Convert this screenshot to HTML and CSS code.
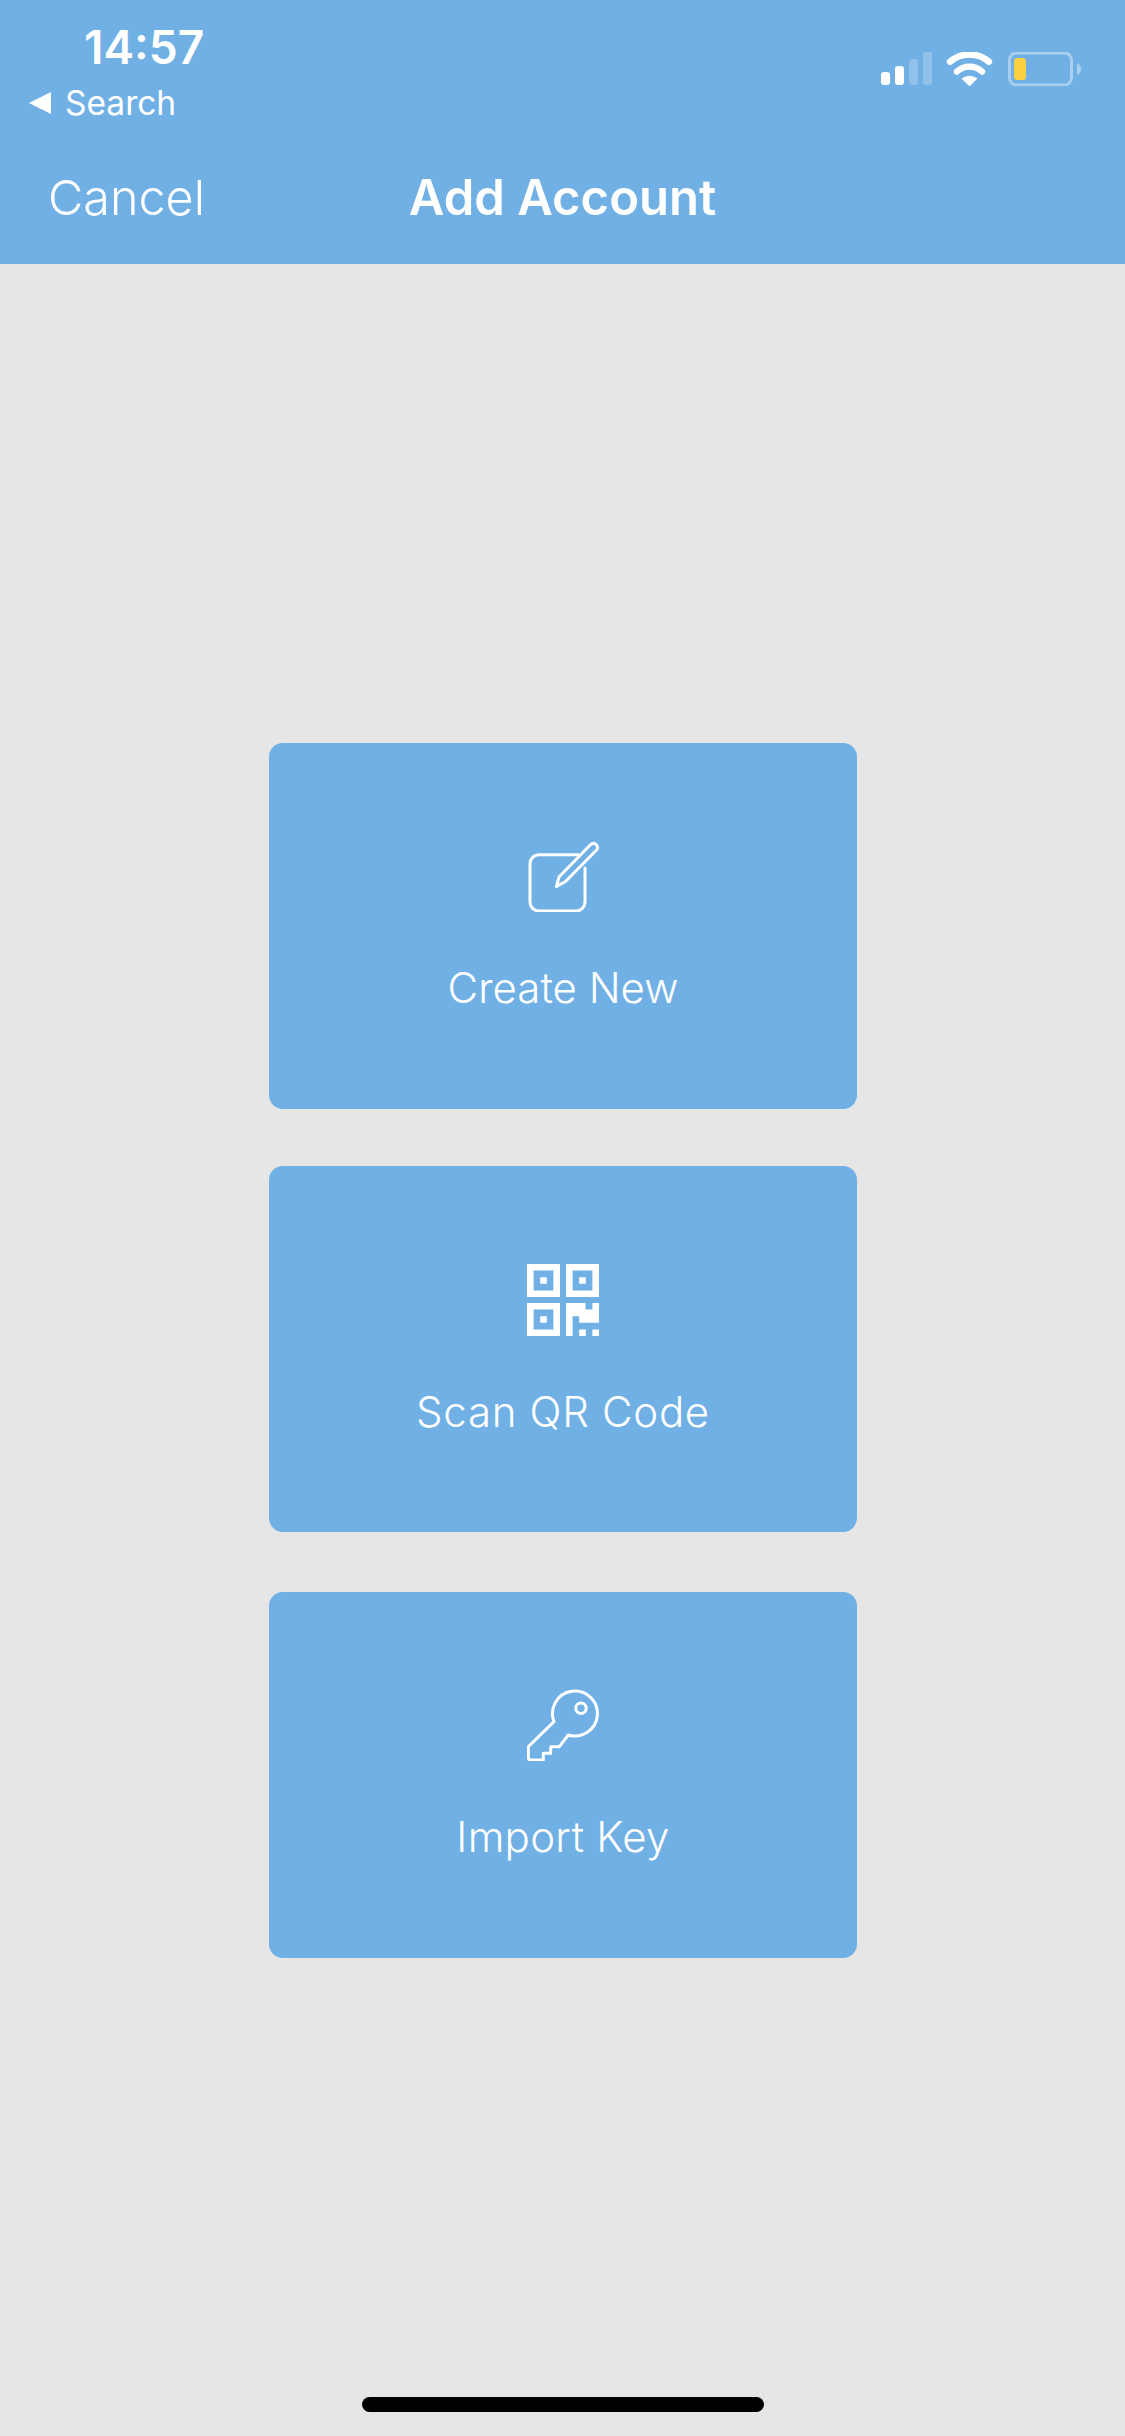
FILE: index.html
```html
<!DOCTYPE html>
<html lang="en">
<head>
<meta charset="utf-8">
<title>Add Account</title>
<link rel="stylesheet" href="styles.css">
</head>
<body>
<div class="screen">
  <header class="header">
    <div class="status">
      <div class="status-left">
        <div class="time">14:57</div>
        <div class="back"><span class="back-arrow"></span><span>Search</span></div>
      </div>
      <svg class="status-icons" width="200" height="34" viewBox="0 0 200 34">
        <rect x="0" y="20" width="9" height="13" rx="3" fill="#fff"/>
        <rect x="14" y="14" width="9" height="19" rx="3" fill="#fff"/>
        <rect x="28" y="7" width="9" height="26" rx="3" fill="#fff" opacity=".22"/>
        <rect x="42" y="0" width="9" height="33" rx="3" fill="#fff" opacity=".22"/>
        <path d="M69 9.7A30 30 0 0 1 108 9.7" fill="none" stroke="#fff" stroke-width="6.4" stroke-linecap="round"/>
        <path d="M76 19.5A18.5 18.5 0 0 1 101 19.5" fill="none" stroke="#fff" stroke-width="6.4" stroke-linecap="round"/>
        <path d="M80.5 26.5Q88.5 21 96.5 26.5L89.5 33.4Q88.5 34 87.5 33.4Z" fill="#fff"/>
        <rect x="128.5" y="1" width="62" height="32" rx="7" fill="none" stroke="#fff" stroke-width="3" opacity=".4"/>
        <rect x="133" y="6" width="12" height="22" rx="3.5" fill="#fdd042"/>
        <path d="M196 11Q200 13 200 17Q200 21 196 23Z" fill="#fff" opacity=".4"/>
      </svg>
    </div>
    <nav class="nav">
      <span class="cancel">Cancel</span>
      <h1 class="title">Add Account</h1>
      <span></span>
    </nav>
  </header>

  <main class="actions">
    <div class="card card-first">
      <svg class="icon" width="72" height="72" viewBox="0 0 72 72" fill="none" stroke="#fff" stroke-width="3" stroke-linejoin="round" stroke-linecap="round">
        <path d="M51 14.7H12a9 9 0 0 0-9 9V62a9 9 0 0 0 9 9H49a9 9 0 0 0 9-9V28"/>
        <path d="M29.5 46.5 32 37 63.7 4.5Q66 2.5 68.5 4 71.5 6.5 70 9.5L38.5 41.5Z"/>
      </svg>
      <span class="label">Create New</span>
    </div>
    <div class="card card-second">
      <svg class="icon icon-soft" width="72" height="72" viewBox="0 0 72 72">
        <path fill="#fff" fill-rule="evenodd" d="M0 0H33V33H0ZM6.6 6.6V26.4H26.4V6.6ZM13.2 13.2H19.8V19.8H13.2ZM39 0H72V33H39ZM45.6 6.6V26.4H65.4V6.6ZM52.2 13.2H58.8V19.8H52.2ZM0 39H33V72H0ZM6.6 45.6V65.4H26.4V45.6ZM13.2 52.2H19.8V58.8H13.2ZM39 39H58.5V45.6H65.4V39H72V58.8H52.2V52.2H45.6V72H39ZM52.2 65.4H58.8V72H52.2ZM65.4 65.4H72V72H65.4Z"/>
      </svg>
      <span class="label label-wide">Scan QR Code</span>
    </div>
    <div class="card">
      <svg class="icon" width="72" height="72" viewBox="0 0 72 72" fill="none" stroke="#fff" stroke-width="3" stroke-linejoin="round">
        <path d="M41.3 46A22.5 22.5 0 1 0 27 32.7L2.5 56.5Q1.3 57.5 1.3 59V68Q1.3 71 4 71H16.3V64.3H23.7V57.7H32.3Z"/>
        <circle cx="54" cy="19.3" r="5.2"/>
      </svg>
      <span class="label label-key">Import Key</span>
    </div>
  </main>

  <div class="home-bar"></div>
</div>
</body>
</html>
```

FILE: styles.css
```css
* {
  box-sizing: border-box;
}

html,
body {
  margin: 0;
  padding: 0;
}

body {
  font-family: Inter, "Liberation Sans", sans-serif;
  color: #fff;
  background: #e6e6e6;
}

.screen {
  width: 1125px;
  height: 2436px;
  display: flex;
  flex-direction: column;
  overflow: hidden;
}

.header {
  height: 264px;
  background: #70b0e5;
  flex: none;
}

.status {
  height: 163px;
  padding: 21px 44px 0 29px;
  display: flex;
  justify-content: space-between;
  align-items: flex-start;
}

.status-left {
  display: flex;
  flex-direction: column;
}

.time {
  font-size: 46px;
  line-height: 52px;
  font-weight: 600;
  margin-left: 55px;
}

.back {
  display: flex;
  align-items: center;
  gap: 14px;
  font-size: 33.5px;
  line-height: 40px;
  margin-top: 10px;
  font-weight: 400;
}

.back-arrow {
  width: 0;
  height: 0;
  border-style: solid;
  border-width: 11.5px 22px 11.5px 0;
  border-color: transparent #fff transparent transparent;
}

.status-icons {
  margin-top: 31px;
}

.nav {
  display: grid;
  grid-template-columns: 1fr auto 1fr;
  align-items: center;
  padding: 0 48px;
  height: 70px;
}

.cancel {
  font-size: 48.5px;
  font-weight: 350;
  line-height: 70px;
}

.title {
  margin: 0;
  font-size: 49px;
  line-height: 70px;
  font-weight: 600;
}

.actions {
  display: flex;
  flex-direction: column;
  align-items: center;
  padding-top: 479px;
  padding-left: 1px;
}

.card {
  width: 588px;
  height: 366px;
  background: #70b0e5;
  border-radius: 14px;
  display: flex;
  flex-direction: column;
  align-items: center;
  padding-top: 97px;
}

.card-first {
  margin-bottom: 57px;
}

.card-second {
  margin-bottom: 60px;
  padding-top: 98px;
}

.icon {
  display: block;
  flex: none;
}

.icon-soft {
  filter: blur(0.6px);
}

.label {
  margin-top: 49px;
  font-size: 42px;
  line-height: 54px;
  font-weight: 300;
}

.label-wide {
  letter-spacing: 0.7px;
}

.label-key {
  letter-spacing: 0.3px;
}

.home-bar {
  width: 402px;
  height: 15px;
  margin: auto auto 24px;
  background: #000;
  border-radius: 8px;
}
```
